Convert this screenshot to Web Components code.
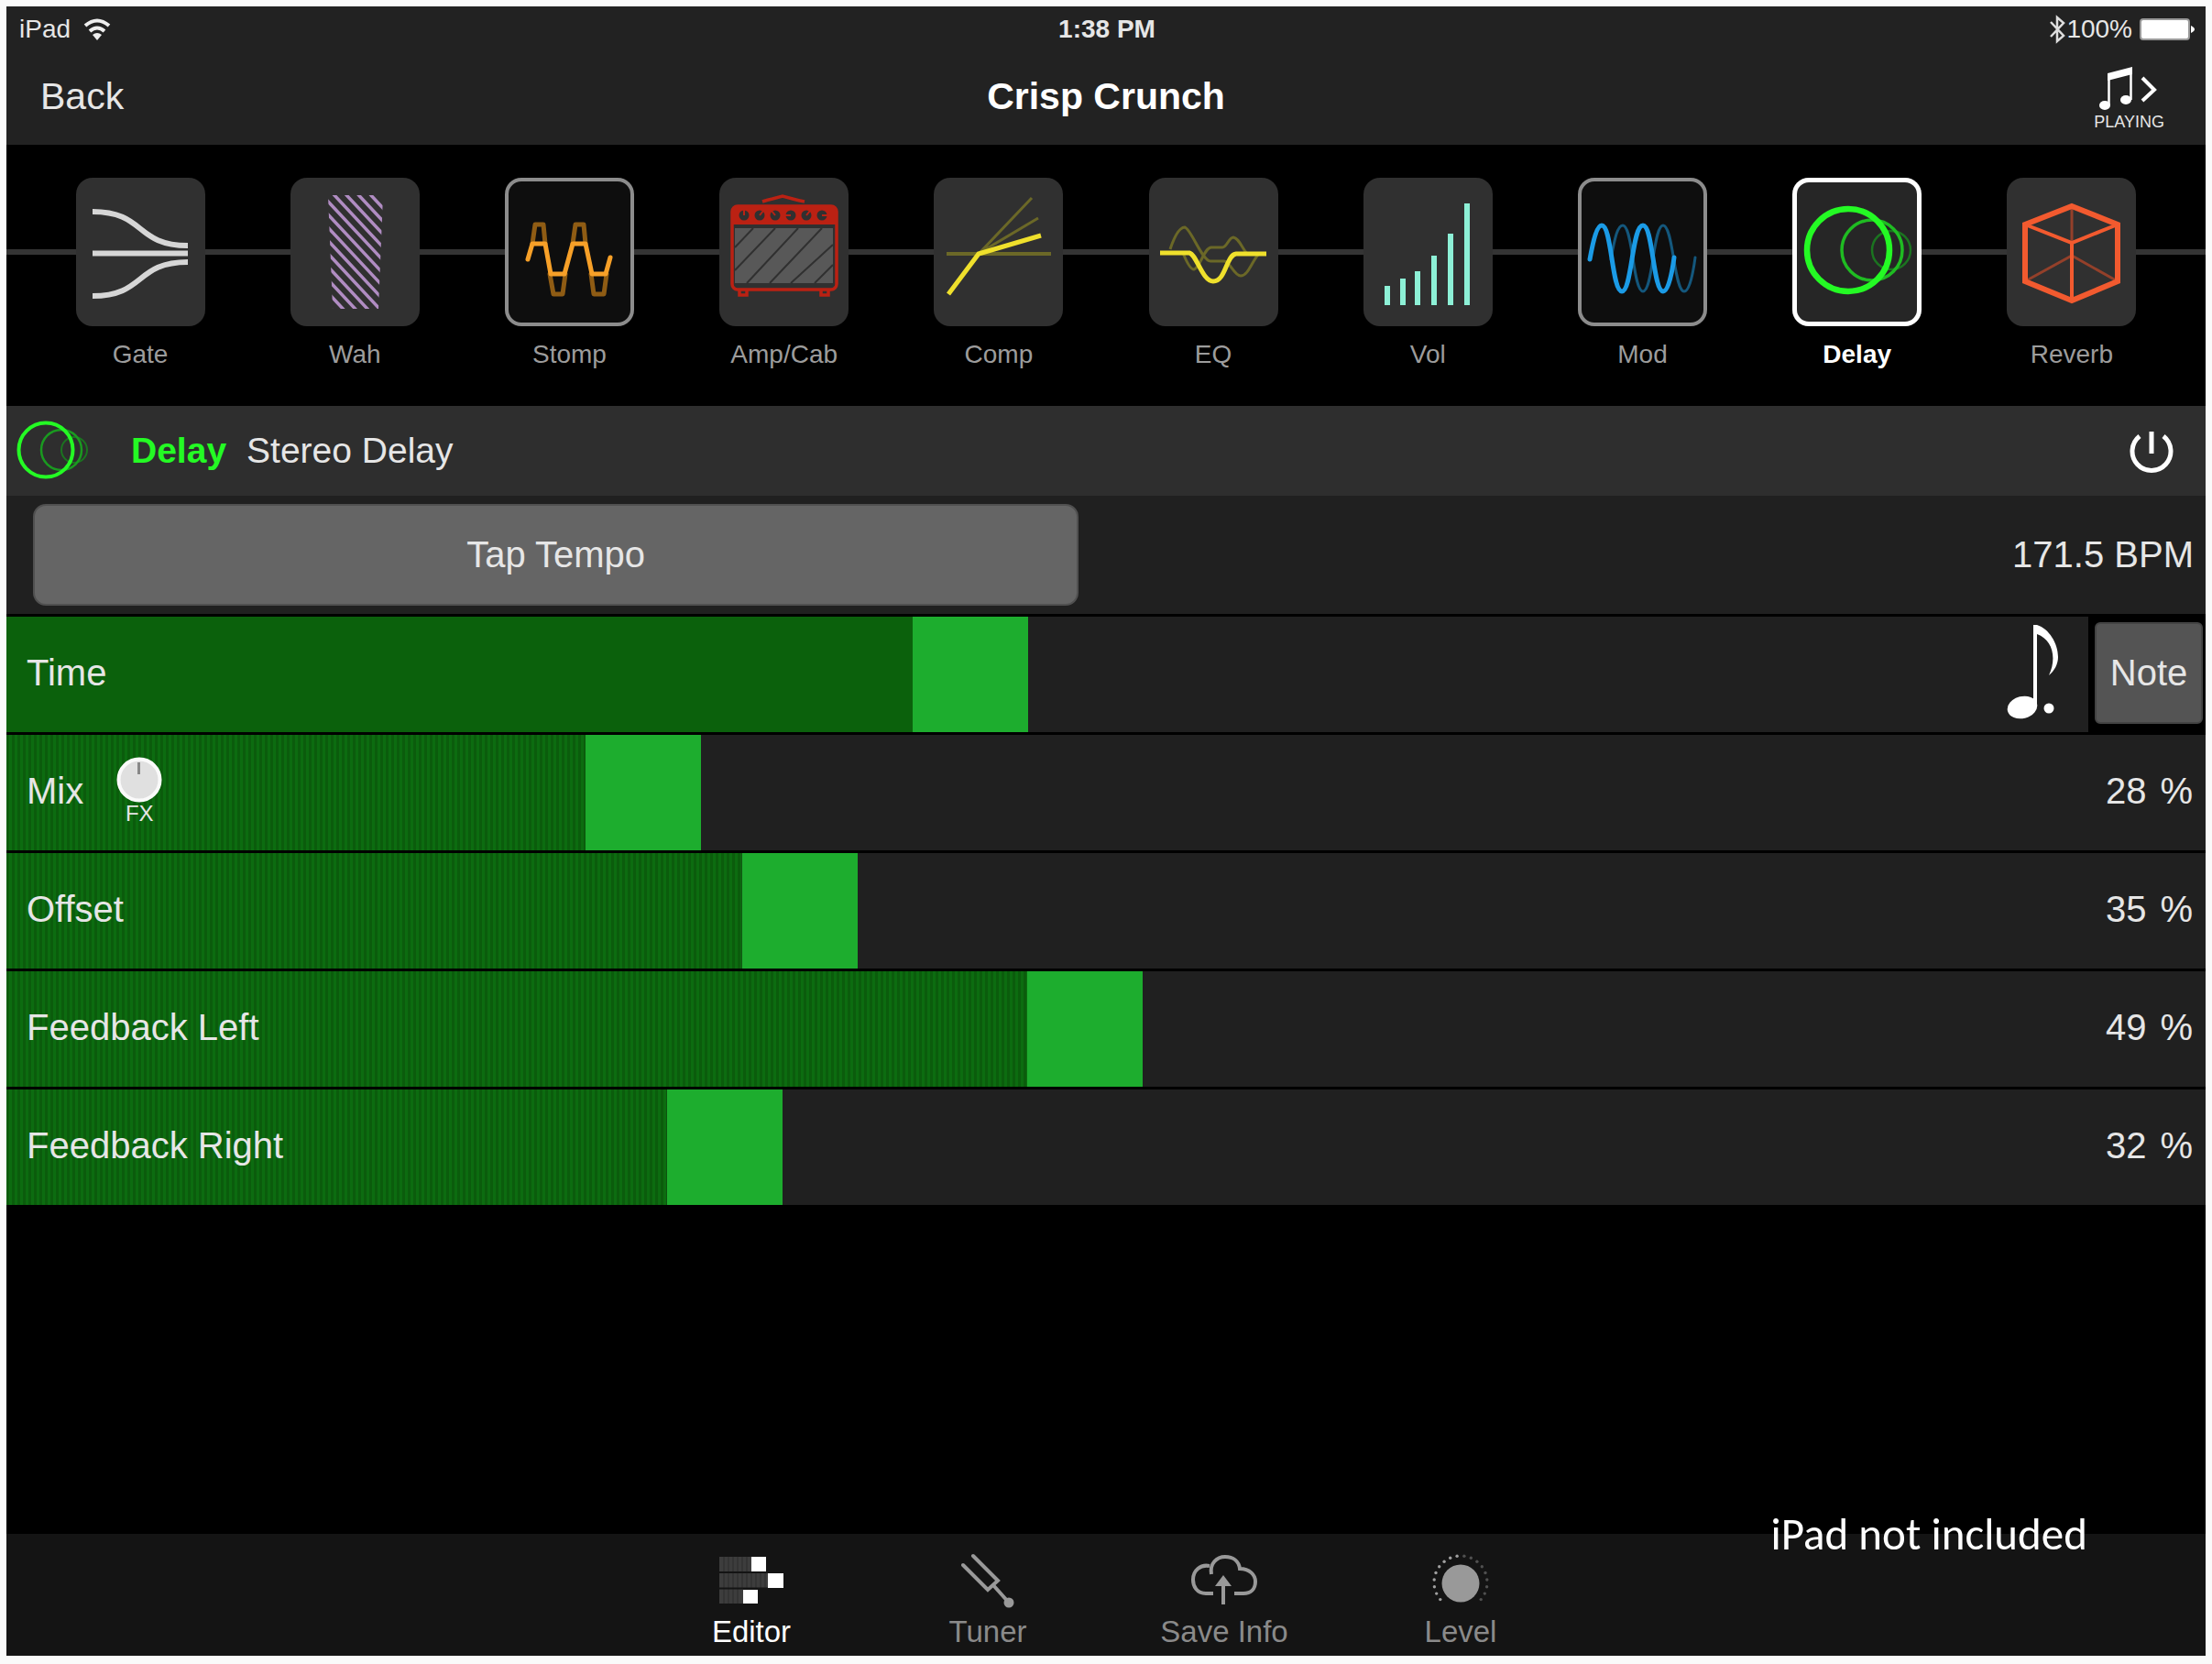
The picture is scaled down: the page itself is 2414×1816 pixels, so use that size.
<!DOCTYPE html>
<html lang="en">
<head>
<meta charset="utf-8">
<meta name="viewport" content="width=device-width, initial-scale=1">
<title>Crisp Crunch</title>
<style>
html, body {
  margin: 0;
}

body {
  box-sizing: border-box;
  min-height: 100vh;
  padding: 7px 7px 9px;
  display: flex;
  background: #fafafa;
  color: #e6e6e6;
  font-family: "Liberation Sans", Arial, sans-serif;
  font-size: 40px;
}
</style>
</head>
<body>

<tone-editor>
  <status-bar slot="top"></status-bar>
  <nav-bar slot="top" heading="Crisp Crunch"></nav-bar>
  <fx-chain slot="top">
    <fx-block icon="gate" label="Gate"></fx-block>
    <fx-block icon="wah" label="Wah"></fx-block>
    <fx-block icon="stomp" label="Stomp" state="on"></fx-block>
    <fx-block icon="amp" label="Amp/Cab"></fx-block>
    <fx-block icon="comp" label="Comp"></fx-block>
    <fx-block icon="eq" label="EQ"></fx-block>
    <fx-block icon="vol" label="Vol"></fx-block>
    <fx-block icon="mod" label="Mod" state="on"></fx-block>
    <fx-block icon="delay" label="Delay" state="selected"></fx-block>
    <fx-block icon="reverb" label="Reverb"></fx-block>
  </fx-chain>

  <effect-header type="Delay" model="Stereo Delay"></effect-header>
  <tempo-row bpm="171.5"></tempo-row>
  <param-slider label="Time" value="46.1" plain>
    <note-glyph slot="value"></note-glyph>
    <note-button slot="side">Note</note-button>
  </param-slider>
  <param-slider label="Mix" value="27.8" unit="%"><fx-knob slot="badge">FX</fx-knob></param-slider>
  <param-slider label="Offset" value="35.3" unit="%"></param-slider>
  <param-slider label="Feedback Left" value="49" unit="%"></param-slider>
  <param-slider label="Feedback Right" value="31.7" unit="%"></param-slider>

  <tab-bar slot="bottom">
    <tab-item icon="editor" active>Editor</tab-item>
    <tab-item icon="tuner">Tuner</tab-item>
    <tab-item icon="save">Save Info</tab-item>
    <tab-item icon="level">Level</tab-item>
    <span slot="notice">iPad not included</span>
  </tab-bar>
</tone-editor>

<script>
// diagonal hatching for the wah pedal
let hatch = ""
for (let k = -10; k < 4; k++) {
  hatch += `M${47 + 13.3 * k} 18l140 150`
}

// ring of ticks round the level knob, dimmer on the right half
let ticks = ""
for (let i = 0; i < 18; i++) {
  const a = (-130 + i * 260 / 17) * Math.PI / 180
  const x = 32 + 29 * Math.sin(a)
  const y = 33 - 29 * Math.cos(a)
  ticks += `<circle cx="${x.toFixed(1)}" cy="${y.toFixed(1)}" r="1.7" fill="${i < 9 ? "#a0a0a0" : "#505050"}"/>`
}

let bars = ""
const barTops = [[26, 118], [43, 110], [59, 102], [77, 85], [95, 61], [113, 28]]
barTops.forEach(([x, y]) => {
  bars += `<path d="M${x} ${y}V139"/>`
})

let knobs = ""
const knobTicks = ["0 -6", "4 -5", "-4 -5", "-6 0", "4 -5", "6 0"]
knobTicks.forEach((t, i) => {
  const x = 27 + i * 17
  knobs += `<circle cx="${x}" cy="41" r="5.5" fill="#303030"/><path d="M${x} 41l${t}" stroke="#bb2113" stroke-width="2"/>`
})

const blockIcons = {
  gate: `<g fill="none" stroke="#d6d6d6" stroke-width="6"><path d="M18 37C76 37 64 74 122 74M18 82.500H122M18 129C76 129 64 92 122 92"/></g>`,
  wah: `<clipPath id="c"><path d="M41 19H101L96 143H46Z"/></clipPath><path clip-path="url(#c)" d="${hatch}" fill="none" stroke="#b08cc2" stroke-width="3.500"/>`,
  stomp: `<g fill="none" stroke-width="5" stroke-linecap="round" stroke-linejoin="round">
    <path stroke="#8f5c14" d="M30 72L33 51H42L44 72M49 105L53 127H63L66 105M74 72L77 51H86L88 72M94 105L97 127H108L111 105"/>
    <path stroke="#f7a028" d="M25 89L30 72H44L50 105H65L74 72H88L95 105H110L115 87"/></g>`,
  amp: `<g fill="none" stroke="#bb2113" stroke-width="3.500">
    <path d="M47 26Q53 24 58 23L69 20L80 23Q87 25 93 26"/>
    <rect x="14" y="31" width="114" height="91" rx="6"/>
    <path d="M22 123V128H30V123M111 123V128H119V123"/></g>
    <path d="M14 51V35Q14 31 19 31H123Q128 31 128 35V51Z" fill="#bb2113"/>${knobs}
    <rect x="17" y="55" width="107" height="60" fill="#585858"/>
    <path d="M37 55L17 76M61 55L17 101M86 55L30 115M112 55L55 115M124 73L78 115M124 95L104 115" stroke="#303030" stroke-width="2" fill="none"/>`,
  comp: `<g fill="none" stroke="#6b6827"><path stroke-width="4" d="M14 83H128"/><path stroke-width="3" d="M50 82L107 22M50 82L114 44"/></g>
    <path d="M16 127L49 83L117 63" fill="none" stroke="#efe02c" stroke-width="5"/>`,
  eq: `<g fill="none" stroke="#6b6827" stroke-width="3">
    <path d="M23 78C29 60 34 54 39 54C46 56 58 91 67 91H82C88 91 93 107 100 107C108 107 112 92 119 84"/>
    <path d="M37 82C41 92 45 100 49 100C56 98 60 76 68 76H80C85 76 87 65 92 65C98 66 101 76 107 83"/></g>
    <path d="M12 82H44C52 84 58 113 70 113C84 113 84 84 95 83H128" fill="none" stroke="#efe02c" stroke-width="5"/>`,
  vol: `<g stroke="#8df0d6" stroke-width="6">${bars}</g>`,
  mod: `<g fill="none" stroke-linecap="round">
    <path stroke="#14577c" stroke-width="3" d="M36 89C40 67 43 52 49 52C60 52 60 124 71 124C82 124 82 52 93 52C104 52 105 124 116 124C122 124 126 102 128 87"/>
    <path stroke="#1b9be6" stroke-width="5" d="M13 89C17 67 21 52 26 52C37 52 37 124 48 124C59 124 59 52 71 52C82 52 82 124 93 124C99 124 103 102 105 87"/></g>`,
  delay: `<g fill="none"><circle cx="108" cy="79" r="21" stroke="#1b7420" stroke-width="2.500"/>
    <circle cx="87" cy="79" r="33" stroke="#1fbc22" stroke-width="3.500"/>
    <circle cx="61" cy="79" r="45" stroke="#24fa24" stroke-width="6.500"/></g>`,
  reverb: `<g fill="none"><path stroke="#94402a" stroke-width="3" d="M71 31V70M20 113L71 85L121 113"/>
    <path stroke="#f25a2f" stroke-width="4" d="M20 51L71 71L121 51M71 71V132"/>
    <path stroke="#f25a2f" stroke-width="6" d="M71 31L121 51V113L71 134L20 113V51Z"/></g>`
}

const tabIcons = {
  editor: `<svg width="70" height="62" viewBox="0 0 70 62"><g fill="#3d3d3d"><path d="M0 5H35V21H0ZM0 23H53V39H0ZM0 40H26V56H0Z"/></g>
    <path d="M5 5V56M10 5V56M15 5V56M20 5V56M25 5V39M30 5V39M35 23V39M40 23V39M45 23V39M50 23V39" stroke="#2c2c2c" stroke-width="1"/>
    <path d="M0 22H70M0 39.500H70" stroke="#141414" stroke-width="2"/>
    <path d="M35 5H51V21H35ZM53 23H70V39H53ZM26 41H42V56H26Z" fill="#fff"/></svg>`,
  tuner: `<svg width="58" height="62" viewBox="0 0 58 62"><g fill="none" stroke="#999" stroke-width="4" stroke-linecap="round"><path d="M13 4L40 31L29 41L2 14M35 36L52 55"/></g><circle cx="52" cy="55" r="5.500" fill="#999"/></svg>`,
  save: `<svg width="74" height="62" viewBox="0 0 74 62"><g fill="none" stroke="#999" stroke-width="4"><path d="M25 45H17C7 45 3 37 3 30C3 20 11 13 21 15M23 24C21 12 29 5 38 5C47 5 53 10 54 18C65 18 71 25 71 32C71 40 66 45 58 45H48M36 57V32"/></g><path d="M36 25L45 37H27Z" fill="#999"/></svg>`,
  level: `<svg width="64" height="62" viewBox="0 0 64 62">${ticks}<circle cx="32" cy="34" r="20.500" fill="#999"/></svg>`
}

class BaseElement extends HTMLElement {
  constructor() {
    super()
    this.attachShadow({ mode: "open" })
  }

  connectedCallback() {
    this.shadowRoot.innerHTML = this.render()
    this.ready()
  }

  attr(name) {
    return this.getAttribute(name) || ""
  }

  ready() {}
}

class ToneEditor extends BaseElement {
  render() {
    return `
<style>
:host {
  flex: 1;
  min-width: 0;
  display: flex;
  flex-direction: column;
  background: #000;
}
main {
  flex: 1;
  display: flex;
  flex-direction: column;
  gap: 3px;
}
</style>
<header><slot name="top"></slot></header>
<main><slot></slot></main>
<slot name="bottom"></slot>`
  }
}
customElements.define("tone-editor", ToneEditor)

class StatusBar extends BaseElement {
  render() {
    return `
<style>
:host {
  display: grid;
  grid-template-columns: 1fr auto 1fr;
  align-items: center;
  height: 49px;
  padding: 0 12px 0 14px;
  background: #222;
  font-size: 28px;
  line-height: 32px;
}
div {
  display: flex;
  align-items: center;
}
.network {
  gap: 14px;
}
.power {
  justify-content: flex-end;
}
.battery {
  margin-left: 8px;
}
time {
  font-weight: bold;
}
</style>
<div class="network">
  <span>iPad</span>
  <svg width="30" height="24" viewBox="0 0 30 24" fill="none" stroke="#eee" stroke-width="4"><path d="M2 8Q15 -3 28 8M7 14Q15 7 23 14"/><path d="M10 18Q15 14 20 18L15 24Z" fill="#eee" stroke="none"/></svg>
</div>
<time>1:38 PM</time>
<div class="power">
  <svg width="19" height="32" viewBox="0 0 19 32" fill="none" stroke="#ddd" stroke-width="2.500"><path d="M2 8L16 23L9 29V3L16 9L2 24"/></svg>
  <span>100%</span>
  <svg class="battery" width="60" height="24" viewBox="0 0 60 24"><rect x="1" y="1" width="53" height="22" rx="3" fill="#fff" stroke="#999" stroke-width="2"/><path d="M56 8Q60 10 60 12T56 16Z" fill="#fff"/></svg>
</div>`
  }
}
customElements.define("status-bar", StatusBar)

class NavBar extends BaseElement {
  render() {
    return `
<style>
:host {
  display: grid;
  grid-template-columns: 1fr auto 1fr;
  align-items: center;
  height: 102px;
  box-sizing: border-box;
  padding: 0 37px 4px;
  background: #222;
  font-size: 41px;
}
button {
  padding: 0;
  border: 0;
  background: none;
  color: inherit;
  font: inherit;
  cursor: pointer;
}
.back {
  justify-self: start;
}
h1 {
  margin: 0;
  color: #fff;
  font-size: 41px;
  line-height: 48px;
}
.playing {
  justify-self: end;
  display: flex;
  flex-direction: column;
  align-items: center;
  gap: 2px;
  padding-right: 8px;
  font-size: 18px;
  line-height: 20px;
}
</style>
<button class="back">Back</button>
<h1>${this.attr("heading")}</h1>
<button class="playing">
  <svg width="76" height="54" viewBox="0 -5 76 54"><g fill="#fff"><ellipse cx="11" cy="43" rx="6" ry="5"/><ellipse cx="34" cy="37" rx="6" ry="5"/><path d="M14 8L41 1V9L14 16Z"/></g>
    <path d="M15.500 10V43M39.500 4V37" stroke="#fff" stroke-width="2.500"/><path d="M52 13L65 26L52 38" fill="none" stroke="#fff" stroke-width="4"/></svg>
  <span>PLAYING</span>
</button>`
  }
}
customElements.define("nav-bar", NavBar)

class FxChain extends BaseElement {
  render() {
    return `
<style>
:host {
  display: grid;
  grid-template-columns: repeat(10, 1fr);
  box-sizing: border-box;
  min-height: 285px;
  padding: 36px 29px 0;
  background: linear-gradient(#343434, #343434) 0 114px / 100% 6px no-repeat #000;
}
</style>
<slot></slot>`
  }
}
customElements.define("fx-chain", FxChain)

class FxBlock extends BaseElement {
  render() {
    return `
<style>
:host {
  display: flex;
  justify-content: center;
}
button {
  display: flex;
  flex-direction: column;
  align-items: center;
  gap: 15px;
  padding: 0;
  border: 0;
  background: none;
  color: #9c9c9c;
  font: inherit;
  font-size: 28px;
  line-height: 32px;
  cursor: pointer;
}
.tile {
  display: block;
  width: 141px;
  height: 162px;
  border-radius: 18px;
  background: #303030;
}
svg {
  display: block;
}
:host([state]) .tile {
  background: #0e0e0e;
  box-shadow: inset 0 0 0 4px #8c8c8c;
}
:host([state="selected"]) .tile {
  background: #262626;
  box-shadow: inset 0 0 0 5px #fff;
}
:host([state="selected"]) button {
  color: #fff;
  font-weight: bold;
}
</style>
<button>
  <span class="tile"><svg width="141" height="162" viewBox="0 0 141 162">${blockIcons[this.attr("icon")]}</svg></span>
  <span>${this.attr("label")}</span>
</button>`
  }
}
customElements.define("fx-block", FxBlock)

class EffectHeader extends BaseElement {
  render() {
    return `
<style>
:host {
  display: flex;
  align-items: center;
  height: 98px;
  margin-bottom: -3px;
  padding: 0 34px 0 8px;
  background: #2e2e2e;
}
h2 {
  flex: 1;
  margin: 0 0 0 46px;
  font-size: 39px;
  line-height: 48px;
  font-weight: normal;
}
b {
  margin-right: 22px;
  color: #24fa24;
}
button {
  padding: 0;
  border: 0;
  background: none;
  line-height: 0;
  cursor: pointer;
}
</style>
<svg width="82" height="70" viewBox="0 0 82 70" fill="none"><circle cx="66" cy="34" r="14" stroke="#1b7420" stroke-width="2"/><circle cx="52" cy="34" r="22" stroke="#1a9a20" stroke-width="2.500"/><circle cx="35" cy="34" r="29.500" stroke="#24fa24" stroke-width="4"/></svg>
<h2><b>${this.attr("type")}</b>${this.attr("model")}</h2>
<button aria-label="Bypass"><svg width="50" height="50" viewBox="0 0 50 50" fill="none" stroke="#fff" stroke-width="5"><path d="M12 9A21 21 0 1 0 38 9M25 4V28"/></svg></button>`
  }
}
customElements.define("effect-header", EffectHeader)

class TempoRow extends BaseElement {
  render() {
    return `
<style>
:host {
  display: flex;
  justify-content: space-between;
  align-items: center;
  height: 129px;
  box-sizing: border-box;
  padding: 0 13px 0 29px;
  background: #202020;
}
button {
  width: 48.400%;
  height: 111px;
  border: 2px solid #505050;
  border-radius: 14px;
  background: #656565;
  color: inherit;
  font: inherit;
  cursor: pointer;
}
</style>
<button>Tap Tempo</button>
<output>${this.attr("bpm")} BPM</output>`
  }
}
customElements.define("tempo-row", TempoRow)

class ParamSlider extends BaseElement {
  render() {
    const value = this.attr("value")
    const unit = this.attr("unit")
    return `
<style>
:host {
  --thumb: 126px;
  display: flex;
}
.track {
  flex: 1;
  display: grid;
  grid-template-columns: auto 1fr;
  align-items: center;
  background: #202020;
}
input {
  grid-area: 1 / 1 / 2 / 3;
  appearance: none;
  -webkit-appearance: none;
  width: 100%;
  height: var(--thumb);
  margin: 0;
  background: repeating-linear-gradient(90deg, #0b5c0c 0 3px, #0c6c10 3px 6px) no-repeat;
  background-size: calc((100% - var(--thumb)) * var(--pos)) 100%;
}
:host([plain]) input {
  background-image: linear-gradient(#0b610c, #0b610c);
}
input::-webkit-slider-thumb {
  -webkit-appearance: none;
  width: var(--thumb);
  height: var(--thumb);
  background: #1dad2e;
}
input::-moz-range-thumb {
  width: var(--thumb);
  height: var(--thumb);
  border: 0;
  border-radius: 0;
  background: #1dad2e;
}
.name, .value {
  grid-row: 1;
  display: flex;
  align-items: center;
  z-index: 1;
  pointer-events: none;
}
.name {
  grid-column: 1;
  gap: 36px;
  padding: 0 0 4px 22px;
}
.value {
  grid-column: 2;
  justify-self: end;
  padding: 0 14px 4px 0;
}
output {
  display: flex;
  gap: 15px;
}
:host([plain]) .value {
  padding-right: 31px;
}
</style>
<div class="track">
  <input id="range" type="range" min="0" max="100" step="0.1" value="${value}">
  <div class="name"><label for="range">${this.attr("label")}</label><slot name="badge"></slot></div>
  <div class="value"><slot name="value"><output for="range"><span id="number"></span> <span>${unit}</span></output></slot></div>
</div>
<slot name="side"></slot>`
  }

  ready() {
    this.input = this.shadowRoot.getElementById("range")
    this.input.addEventListener("input", () => this.update())
    this.update()
  }

  update() {
    this.input.style.setProperty("--pos", this.input.value / 100)
    if (this.attr("unit")) {
      this.shadowRoot.getElementById("number").textContent = Math.round(this.input.value)
    }
  }
}
customElements.define("param-slider", ParamSlider)

class NoteGlyph extends BaseElement {
  render() {
    return `
<style>
:host {
  display: block;
  line-height: 0;
}
</style>
<svg width="58" height="108" viewBox="0 0 58 108" fill="#fff" role="img" aria-label="Dotted eighth note"><ellipse cx="17" cy="92" rx="16.500" ry="12" transform="rotate(-14 17 92)"/><path d="M29 2H33C46 6 56 22 56 37C56 45 52 52 46 57C55 38 50 18 33 12V92H29Z"/><circle cx="46" cy="93" r="5.500"/></svg>`
  }
}
customElements.define("note-glyph", NoteGlyph)

class NoteButton extends BaseElement {
  render() {
    return `
<style>
:host {
  display: flex;
  padding: 6px 3px 9px 7px;
}
button {
  width: 118px;
  padding: 0;
  border: 2px solid #444;
  border-radius: 6px;
  background: #545454;
  color: inherit;
  font: inherit;
  cursor: pointer;
}
</style>
<button><slot></slot></button>`
  }
}
customElements.define("note-button", NoteButton)

class FxKnob extends BaseElement {
  render() {
    return `
<style>
:host {
  display: flex;
  flex-direction: column;
  align-items: center;
  font-size: 24px;
  line-height: 24px;
}
svg {
  display: block;
}
</style>
<svg width="50" height="50" viewBox="0 0 50 50"><circle cx="25" cy="25" r="22.500" fill="#e0e0e0" stroke="#fafafa" stroke-width="4"/><path d="M24.500 6V19" stroke="#888" stroke-width="3"/></svg>
<slot></slot>`
  }
}
customElements.define("fx-knob", FxKnob)

class TabBar extends BaseElement {
  render() {
    return `
<style>
:host {
  position: relative;
  display: block;
  background: #141414;
}
nav {
  display: grid;
  grid-template-columns: repeat(4, 258px);
  justify-content: center;
  min-height: 133px;
}
/* caption floats over the edge of the bar */
.notice {
  position: absolute;
  top: -28px;
  right: 129px;
  color: #fff;
  font-family: Carlito, Lato, sans-serif;
  font-size: 49px;
  line-height: 56px;
}
</style>
<nav><slot></slot></nav>
<div class="notice"><slot name="notice"></slot></div>`
  }
}
customElements.define("tab-bar", TabBar)

class TabItem extends BaseElement {
  render() {
    return `
<style>
:host {
  display: flex;
  justify-content: center;
}
button {
  display: flex;
  flex-direction: column;
  align-items: center;
  gap: 5px;
  padding: 20px 0 0;
  border: 0;
  background: none;
  color: #8a8a8a;
  font: inherit;
  font-size: 33px;
  line-height: 40px;
  cursor: pointer;
}
:host([active]) button {
  color: #fff;
}
</style>
<button>${tabIcons[this.attr("icon")]}<span><slot></slot></span></button>`
  }
}
customElements.define("tab-item", TabItem)
</script>
</body>
</html>
